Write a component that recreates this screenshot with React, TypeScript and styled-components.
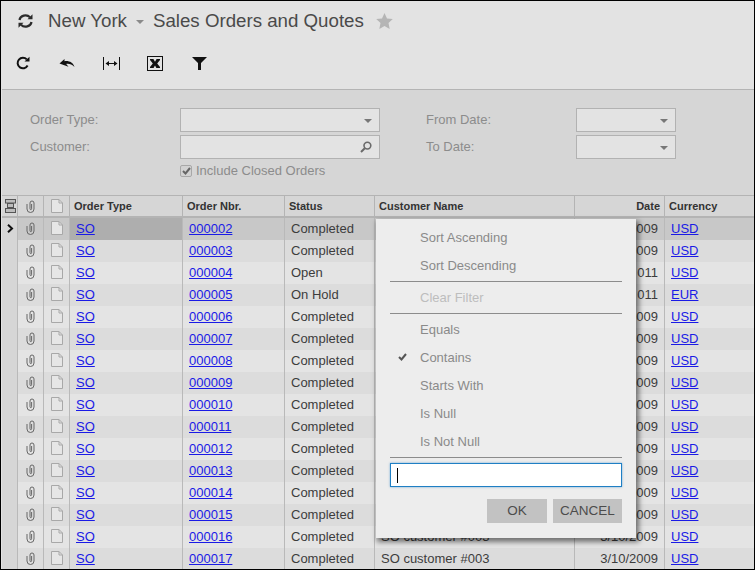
import React from "react";
import styled, { createGlobalStyle } from "styled-components";

const GlobalStyle = createGlobalStyle`
  html, body { margin: 0; padding: 0; background: #e3e3e3; }
  body { font-family: "Liberation Sans", Arial, sans-serif; }
`;

const Page = styled.div`
  position: relative;
  box-sizing: border-box;
  width: 755px;
  height: 570px;
  overflow: hidden;
  border: 1px solid #000;
  background: #e3e3e3;
`;

const TitleBar = styled.div`
  display: flex;
  align-items: center;
  height: 39px;
  padding-left: 16px;
  color: #4a4a4a;
  font-size: 18.700px;
`;

const TitleIcon = styled.span`
  display: flex;
  width: 31px;
`;

const Caret = styled.span<{ $color?: string }>`
  width: 0;
  height: 0;
  margin: 3px 9px 0 9px;
  border: 4px solid transparent;
  border-top: 4px solid ${(p) => p.$color || "#8a8a8a"};
  border-bottom: 0;
`;

const FieldCaret = styled(Caret)`
  margin: 1px 0 0;
`;

const StarIcon = styled.span`
  display: flex;
  margin-left: 12px;
`;

const Toolbar = styled.div`
  display: flex;
  align-items: center;
  height: 49px;
  padding: 0 0 3px 11px;
  box-sizing: border-box;
  gap: 22px;
`;

const ToolButton = styled.span`
  display: flex;
  justify-content: center;
  width: 22px;
`;

const FilterPanel = styled.div`
  box-sizing: border-box;
  display: flex;
  height: 106px;
  margin-left: 1px;
  padding-top: 18px;
  background: #d6d6d6;
  border-top: 1px solid #b4b4b4;
  color: #8c8c8c;
  font-size: 13px;
`;

const FilterColumn = styled.div<{ $fieldWidth: number }>`
  display: grid;
  grid-template-columns: 150px ${(p) => p.$fieldWidth}px;
  grid-auto-rows: 24px;
  row-gap: 3px;
  align-items: center;
  margin-left: ${(p) => (p.$fieldWidth > 150 ? 28 : 46)}px;
`;

const FilterLabel = styled.span`
  padding-bottom: 2px;
`;

const FieldBox = styled.div`
  box-sizing: border-box;
  display: flex;
  align-items: center;
  justify-content: flex-end;
  height: 24px;
  padding-right: 7px;
  background: #e3e3e3;
  border: 1px solid #b2b2b2;
`;

const CheckRow = styled.label`
  display: flex;
  align-items: center;
  gap: 4px;
  grid-column: 2;
  height: 17px;
  margin-top: -7px;
  white-space: nowrap;
`;

const CheckBox = styled.span`
  box-sizing: border-box;
  display: flex;
  align-items: center;
  justify-content: center;
  width: 12px;
  height: 12px;
  border: 1px solid #a8a8a8;
  border-radius: 2px;
  background: #d2d2d2;
`;

const Grid = styled.div`
  margin-left: 1px;
`;

const COLUMNS = "16px 26px 26px 113px 102px 90px 200px 90px 1fr";

const HeaderRow = styled.div`
  display: grid;
  grid-template-columns: ${COLUMNS};
  height: 23px;
  background: #d6d6d6;
  border-top: 1px solid #b4b4b4;
  border-bottom: 2px solid #b4b4b4;
  box-sizing: border-box;
`;

const HeaderCell = styled.div<{ $right?: boolean }>`
  display: flex;
  align-items: center;
  justify-content: ${(p) => (p.$right ? "flex-end" : "flex-start")};
  padding: 0 4px;
  border-right: 1px solid #b4b4b4;
  color: #333;
  font-size: 11px;
  font-weight: bold;
  white-space: nowrap;
  &:last-child {
    border-right: 0;
  }
`;

const IconHeader = styled(HeaderCell)`
  justify-content: center;
  padding: 0;
`;

const SelectorHeader = styled(IconHeader)`
  padding-left: 2px;
`;

const Row = styled.div<{ $tone: string }>`
  display: grid;
  grid-template-columns: ${COLUMNS};
  height: 22px;
  background: ${(p) => p.$tone};
  color: #3c3c3c;
  font-size: 13px;
`;

const Cell = styled.div<{ $right?: boolean; $bg?: string }>`
  box-sizing: border-box;
  display: flex;
  align-items: center;
  justify-content: ${(p) => (p.$right ? "flex-end" : "flex-start")};
  padding: 0 6px 2px;
  overflow: hidden;
  border-right: 1px solid #b9b9b9;
  background: ${(p) => p.$bg || "transparent"};
  white-space: nowrap;
  &:last-child {
    border-right: 0;
  }
`;

const SelectorCell = styled(Cell)`
  justify-content: center;
  padding: 0 0 2px 1px;
  background: ${(p) => p.$bg || "#d6d6d6"};
`;

const IconCell = styled(Cell)`
  justify-content: center;
  padding: 0 0 2px;
`;

const DataLink = styled.a`
  color: #1a1ae6;
  text-decoration: underline;
`;

const Popup = styled.div`
  position: absolute;
  left: 375px;
  top: 218px;
  box-sizing: border-box;
  width: 260px;
  height: 319px;
  padding: 5px 14px 0;
  background: #ededed;
  box-shadow: 2px 3px 5px 1px rgba(0, 0, 0, 0.5);
  color: #8a8a8a;
  font-size: 13px;
`;

const MenuItem = styled.div<{ $disabled?: boolean }>`
  position: relative;
  box-sizing: border-box;
  display: flex;
  align-items: center;
  height: 28px;
  padding: 0 0 2px 30px;
  color: ${(p) => (p.$disabled ? "#bdbdbd" : "#8a8a8a")};
`;

const Tick = styled.span`
  position: absolute;
  left: 8px;
  top: 9px;
  display: flex;
`;

const Divider = styled.div`
  height: 1px;
  margin: 1px 0 2px;
  background: #8c8c8c;
`;

const FilterInput = styled.div`
  box-sizing: border-box;
  display: flex;
  align-items: center;
  height: 24px;
  margin-top: 5px;
  padding-left: 6px;
  background: #fff;
  border: 1px solid #1f7fc4;
  box-shadow: 0 0 2px rgba(31, 127, 196, 0.6);
`;

const CaretBar = styled.span`
  width: 1px;
  height: 15px;
  background: #000;
`;

const ButtonRow = styled.div`
  display: flex;
  justify-content: flex-end;
  gap: 6px;
  margin-top: 12px;
`;

const PopupButton = styled.button<{ $width: number }>`
  width: ${(p) => p.$width}px;
  height: 24px;
  padding: 0 0 2px;
  border: 0;
  background: #c2c2c2;
  color: #4c4c4c;
  font-family: inherit;
  font-size: 13.500px;
`;

const Sync = () => (
  <svg width="17" height="16" viewBox="0 0 17 16" fill="none" stroke="#2b2b2b" strokeWidth="2.200">
    <path d="M2.500 7A6 5.200 0 0 1 13 4.200" />
    <path d="M14.500 9A6 5.200 0 0 1 4 11.800" />
    <path d="M10.500 6.200h5v-5z" fill="#2b2b2b" stroke="none" />
    <path d="M6.500 9.800h-5v5z" fill="#2b2b2b" stroke="none" />
  </svg>
);

const Refresh = () => (
  <svg width="14" height="14" viewBox="0 0 14 14" fill="none" stroke="#111" strokeWidth="2">
    <path d="M11.600 9.500A5.300 5.300 0 1 1 10.800 3.400" />
    <path d="M8.500 5.600h5V.8z" fill="#111" stroke="none" />
  </svg>
);

const Undo = () => (
  <svg width="16" height="10" viewBox="0 0 16 10">
    <path d="M0.500 5.500 5.500 1v2.200c5-.6 8.500 1.500 10 5.800-2.600-2.700-5.600-3.500-8.300-3L9.500 8.800z" fill="#111" />
  </svg>
);

const FitWidth = () => (
  <svg width="17" height="13" viewBox="0 0 17 13" fill="none" stroke="#111">
    <path d="M.5 0v13M16.500 0v13M3 6.500h11" />
    <path d="M2.500 6.500 6 4v5zM14.500 6.500 11 4v5z" fill="#111" stroke="none" />
  </svg>
);

const ExcelIcon = () => (
  <svg width="16" height="15" viewBox="0 0 16 15">
    <rect x=".5" y=".5" width="15" height="14" fill="#e3e3e3" stroke="#111" />
    <path d="M3 3h3.400L8 5.700 9.600 3H13v1L10.200 7.500 13 11v1H9.400L8 9.400 6.500 12H3v-1l2.800-3.500L3 4z" fill="#111" />
  </svg>
);

const Funnel = () => (
  <svg width="15" height="13" viewBox="0 0 15 13">
    <path d="M0 0h15L9 6v7H6V6z" fill="#111" />
  </svg>
);

const Star = () => (
  <svg width="17" height="16" viewBox="0 0 17 16">
    <path d="M8.500 0l2.500 5.500 5.800.6-4.300 4 1.200 5.900-5.200-3-5.200 3 1.200-5.900L.2 6.100 6 5.500z" fill="#b5b5b5" />
  </svg>
);

const Magnifier = () => (
  <svg width="12" height="12" viewBox="0 0 12 12" fill="none" stroke="#6a6a6a" strokeWidth="1.600">
    <circle cx="7.400" cy="4.600" r="3.400" />
    <path d="M4.800 7.200 1 11" strokeWidth="2" />
  </svg>
);

const Check = ({ color }: { color: string }) => (
  <svg width="9" height="8" viewBox="0 0 9 8" fill="none" stroke={color} strokeWidth="2">
    <path d="M1 4l2.500 2.500L8 1" />
  </svg>
);

const Clip = () => (
  <svg width="9" height="13" viewBox="0 0 9 13" fill="none" stroke="#666">
    <path d="M1 4v5a3.500 3.500 0 0 0 7 0V3a2 2 0 0 0-4 0v5.800a.8.8 0 0 0 1.600 0V4" />
  </svg>
);

const Doc = () => (
  <svg width="12" height="14" viewBox="0 0 12 14" fill="#e6e6e6" stroke="#a8a8a8">
    <path d="M.5.500h7.500l3.500 3.500v9.500H.5z" />
    <path d="M8 .5V4h3.500" fill="none" />
  </svg>
);

const RowsIcon = () => (
  <svg width="11" height="14" viewBox="0 0 11 14" fill="#bdbdbd" stroke="#555">
    <rect x=".5" y=".5" width="10" height="3.500" />
    <rect x="2.500" y="4.500" width="6" height="4" />
    <rect x=".5" y="9.500" width="10" height="4" />
  </svg>
);

const Arrow = () => (
  <svg width="7" height="9" viewBox="0 0 7 9" fill="none" stroke="#111" strokeWidth="2">
    <path d="M1 .8 5 4.500 1 8.200" />
  </svg>
);

const rows = [
  ["000002", "Completed", "", "009", "USD"],
  ["000003", "Completed", "", "009", "USD"],
  ["000004", "Open", "", "011", "USD"],
  ["000005", "On Hold", "", "011", "EUR"],
  ["000006", "Completed", "", "009", "USD"],
  ["000007", "Completed", "", "009", "USD"],
  ["000008", "Completed", "", "009", "USD"],
  ["000009", "Completed", "", "009", "USD"],
  ["000010", "Completed", "", "009", "USD"],
  ["000011", "Completed", "", "009", "USD"],
  ["000012", "Completed", "", "009", "USD"],
  ["000013", "Completed", "", "009", "USD"],
  ["000014", "Completed", "", "009", "USD"],
  ["000015", "Completed", "", "009", "USD"],
  ["000016", "Completed", "SO customer #003", "3/10/2009", "USD"],
  ["000017", "Completed", "SO customer #003", "3/10/2009", "USD"],
];

const toneFor = (i: number) => (i === 0 ? "#c8c8c8" : i % 2 === 1 ? "#dcdcdc" : "#e4e4e4");

export default function App() {
  return (
    <Page>
      <GlobalStyle />
      <TitleBar>
        <TitleIcon>
          <Sync />
        </TitleIcon>
        New York
        <Caret />
        Sales Orders and Quotes
        <StarIcon>
          <Star />
        </StarIcon>
      </TitleBar>
      <Toolbar>
        <ToolButton><Refresh /></ToolButton>
        <ToolButton><Undo /></ToolButton>
        <ToolButton><FitWidth /></ToolButton>
        <ToolButton><ExcelIcon /></ToolButton>
        <ToolButton><Funnel /></ToolButton>
      </Toolbar>
      <FilterPanel>
        <FilterColumn $fieldWidth={200}>
          <FilterLabel>Order Type:</FilterLabel>
          <FieldBox><FieldCaret $color="#777" /></FieldBox>
          <FilterLabel>Customer:</FilterLabel>
          <FieldBox><Magnifier /></FieldBox>
          <CheckRow>
            <CheckBox><Check color="#666" /></CheckBox>
            Include Closed Orders
          </CheckRow>
        </FilterColumn>
        <FilterColumn $fieldWidth={100}>
          <FilterLabel>From Date:</FilterLabel>
          <FieldBox><FieldCaret $color="#777" /></FieldBox>
          <FilterLabel>To Date:</FilterLabel>
          <FieldBox><FieldCaret $color="#777" /></FieldBox>
        </FilterColumn>
      </FilterPanel>
      <Grid>
        <HeaderRow>
          <SelectorHeader><RowsIcon /></SelectorHeader>
          <IconHeader><Clip /></IconHeader>
          <IconHeader><Doc /></IconHeader>
          <HeaderCell>Order Type</HeaderCell>
          <HeaderCell>Order Nbr.</HeaderCell>
          <HeaderCell>Status</HeaderCell>
          <HeaderCell>Customer Name</HeaderCell>
          <HeaderCell $right>Date</HeaderCell>
          <HeaderCell>Currency</HeaderCell>
        </HeaderRow>
        {rows.map(([nbr, status, customer, date, currency], i) => (
          <Row key={nbr} $tone={toneFor(i)}>
            <SelectorCell>{i === 0 && <Arrow />}</SelectorCell>
            <IconCell><Clip /></IconCell>
            <IconCell><Doc /></IconCell>
            <Cell $bg={i === 0 ? "#aeaeae" : undefined}><DataLink>SO</DataLink></Cell>
            <Cell><DataLink>{nbr}</DataLink></Cell>
            <Cell>{status}</Cell>
            <Cell>{customer}</Cell>
            <Cell $right>{date}</Cell>
            <Cell><DataLink>{currency}</DataLink></Cell>
          </Row>
        ))}
      </Grid>
      <Popup>
        <MenuItem>Sort Ascending</MenuItem>
        <MenuItem>Sort Descending</MenuItem>
        <Divider />
        <MenuItem $disabled>Clear Filter</MenuItem>
        <Divider />
        <MenuItem>Equals</MenuItem>
        <MenuItem>
          <Tick><Check color="#555" /></Tick>
          Contains
        </MenuItem>
        <MenuItem>Starts With</MenuItem>
        <MenuItem>Is Null</MenuItem>
        <MenuItem>Is Not Null</MenuItem>
        <Divider />
        <FilterInput><CaretBar /></FilterInput>
        <ButtonRow>
          <PopupButton $width={60}>OK</PopupButton>
          <PopupButton $width={69}>CANCEL</PopupButton>
        </ButtonRow>
      </Popup>
    </Page>
  );
}
